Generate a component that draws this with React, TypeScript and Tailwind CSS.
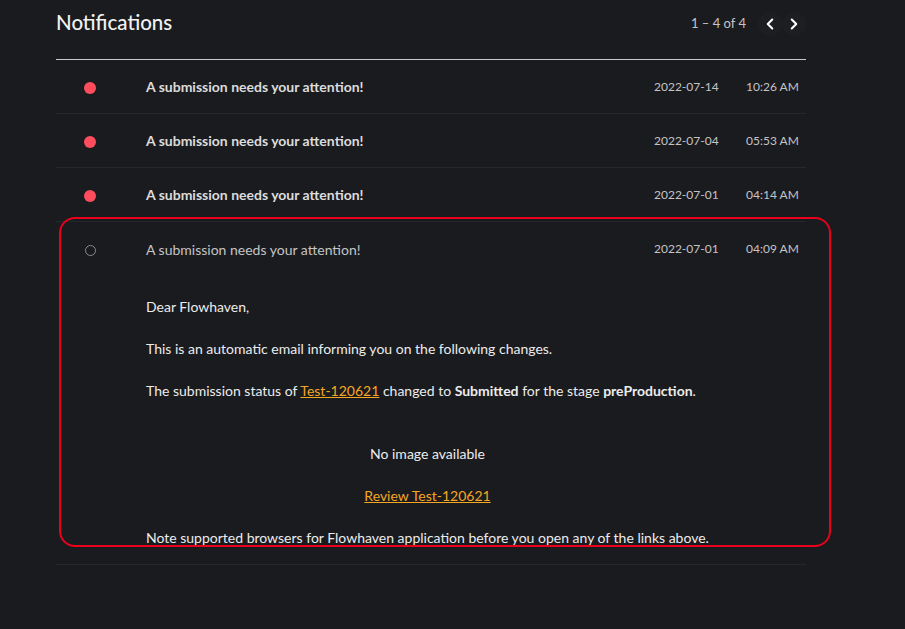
import React from "react";
import { ChevronLeft, ChevronRight } from "lucide-react";

type Note = { date: string; time: string; unread: boolean };

const notes: Note[] = [
  { date: "2022-07-14", time: "10:26 AM", unread: true },
  { date: "2022-07-04", time: "05:53 AM", unread: true },
  { date: "2022-07-01", time: "04:14 AM", unread: true },
];

function Row({ note }: { note: Note }) {
  return (
    <div className="flex h-[54px] items-center border-b border-[#26272c]">
      <div className="w-[90px] pl-[28px] pt-[2px]">
        <div className="h-[12px] w-[12px] rounded-full bg-[#ff4d5e]" />
      </div>
      <div className="flex-1 text-[14px] font-bold text-[#dcdcdc]">A submission needs your attention!</div>
      <div className="w-[92px] whitespace-nowrap text-[12px] text-[#c4c4c6]">{note.date}</div>
      <div className="w-[60px] whitespace-nowrap pr-[8px] text-right text-[12px] text-[#c4c4c6]">{note.time}</div>
    </div>
  );
}

export default function App() {
  return (
    <div className="h-[629px] w-full bg-[#1a1b1f] font-['Lato',sans-serif]">
      <div className="ml-[56px] w-[750px]">
        <div className="flex h-[60px] items-start justify-between border-b border-[#c9c9cb] pt-[7px]">
          <h1 className="text-[20.5px] font-medium text-[#f2f2f2]">Notifications</h1>
          <div className="flex items-center pt-[5px] text-[13px] text-[#c4c4c6]">
            <span className="mr-[12px]">1 – 4 of 4</span>
            <button className="flex h-[24px] w-[24px] items-center justify-center rounded-full bg-[#1d1e22] text-white">
              <ChevronLeft className="h-[18px] w-[18px]" strokeWidth={2.75} />
            </button>
            <button className="flex h-[24px] w-[24px] items-center justify-center rounded-full bg-[#1d1e22] text-white">
              <ChevronRight className="h-[18px] w-[18px]" strokeWidth={2.75} />
            </button>
          </div>
        </div>

        {notes.map((n, i) => (
          <Row key={i} note={n} />
        ))}

        <div className="relative border-b border-[#26272c] pb-[16px]">
          <div className="flex h-[54px] items-center">
            <div className="w-[90px] pl-[29px] pt-[2px]">
              <div className="h-[11px] w-[11px] rounded-full border border-[#8a8b8f]" />
            </div>
            <div className="flex-1 text-[14px] text-[#c4c4c6]">A submission needs your attention!</div>
            <div className="w-[92px] whitespace-nowrap text-[12px] text-[#c4c4c6]">2022-07-01</div>
            <div className="w-[60px] whitespace-nowrap pr-[8px] text-right text-[12px] text-[#c4c4c6]">04:09 AM</div>
          </div>
          <div className="pl-[90px] text-[14px] leading-[20px] text-[#ececec]">
            <p className="mt-[21px]">Dear Flowhaven,</p>
            <p className="mt-[22px]">This is an automatic email informing you on the following changes.</p>
            <p className="mt-[22px]">
              The submission status of <a className="text-[#f5a623] underline">Test-120621</a> changed to{" "}
              <b>Submitted</b> for the stage <b>preProduction</b>.
            </p>
            <div className="w-[563px] text-center">
              <p className="mt-[43px]">No image available</p>
              <p className="mt-[22px]">
                <a className="text-[#f5a623] underline">Review Test-120621</a>
              </p>
            </div>
            <p className="mt-[22px]">Note supported browsers for Flowhaven application before you open any of the links above.</p>
          </div>
          <div className="pointer-events-none absolute left-[3px] top-[-5px] h-[330px] w-[772px] rounded-[16px] border-2 border-[#e8001c]" />
        </div>
      </div>
    </div>
  );
}
